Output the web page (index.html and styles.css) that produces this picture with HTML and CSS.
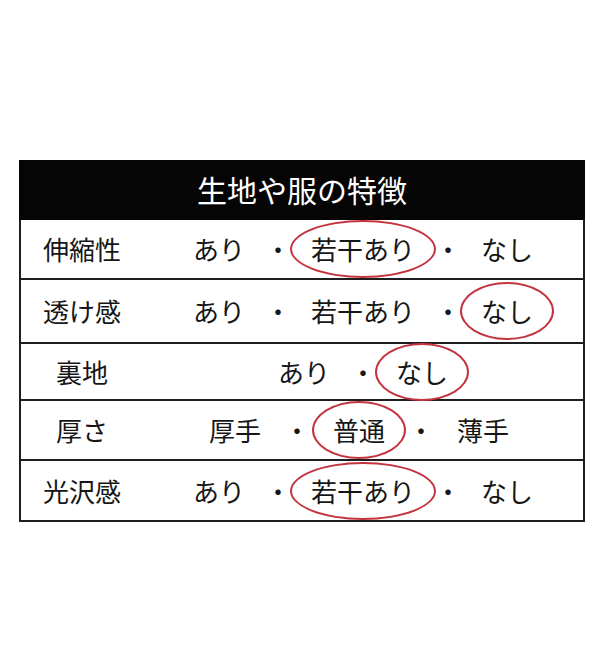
FILE: index.html
```html
<!DOCTYPE html>
<html lang="ja">
<head>
<meta charset="utf-8">
<link rel="stylesheet" href="styles.css">
</head>
<body>
<div class="page">
  <div class="table">
    <div class="head">生地や服の特徴</div>
    <div class="row">
      <div class="label">伸縮性</div>
      <div class="values"><span class="item">あり</span><span class="dot">・</span><span class="item sel">若干あり</span><span class="dot">・</span><span class="item">なし</span></div>
    </div>
    <div class="row">
      <div class="label">透け感</div>
      <div class="values"><span class="item">あり</span><span class="dot">・</span><span class="item">若干あり</span><span class="dot">・</span><span class="item sel">なし</span></div>
    </div>
    <div class="row">
      <div class="label">裏地</div>
      <div class="values"><span class="item">あり</span><span class="dot">・</span><span class="item sel">なし</span></div>
    </div>
    <div class="row">
      <div class="label">厚さ</div>
      <div class="values wide"><span class="item">厚手</span><span class="dot">・</span><span class="item sel">普通</span><span class="dot">・</span><span class="item">薄手</span></div>
    </div>
    <div class="row">
      <div class="label">光沢感</div>
      <div class="values"><span class="item">あり</span><span class="dot">・</span><span class="item sel">若干あり</span><span class="dot">・</span><span class="item">なし</span></div>
    </div>
  </div>
</div>
</body>
</html>
```
FILE: styles.css
```css
html, body {
  margin: 0;
  padding: 0;
  background: #ffffff;
}

.page {
  padding: 160px 0 0 19px;
  font-family: "Noto Sans CJK JP", "Noto Sans", sans-serif;
  color: #161616;
}

.table {
  width: 566px;
  box-sizing: border-box;
  border: 2px solid #1e1e1e;
  border-top: none;
}

.head {
  height: 60px;
  margin: 0 -2px;
  background: #050505;
  color: #ffffff;
  font-size: 30px;
  line-height: 58px;
  text-align: center;
}

.row {
  display: grid;
  grid-template-columns: 122px 1fr;
  height: 60px;
  box-sizing: border-box;
  border-top: 2px solid #1e1e1e;
  align-items: center;
}

.row:nth-child(2) {
  border-top: none;
  height: 58px;
}

.row:nth-child(3) {
  height: 64px;
}

.row:nth-child(4) {
  height: 57px;
}

.row:nth-child(6) {
  height: 61px;
}

.label {
  font-size: 26px;
  line-height: 26px;
  text-align: center;
}

.values {
  display: flex;
  justify-content: center;
  align-items: center;
  gap: 20px;
  font-size: 26px;
  line-height: 26px;
}

.values.wide {
  gap: 23px;
  margin-left: -8px;
}

.item {
  position: relative;
  white-space: nowrap;
}

.item.sel::before {
  content: "";
  position: absolute;
  top: -16px;
  bottom: -16px;
  left: -21px;
  right: -21px;
  border: 2px solid #c4343f;
  border-radius: 50%;
}

.dot {
  width: 26px;
  text-align: center;
}
```
